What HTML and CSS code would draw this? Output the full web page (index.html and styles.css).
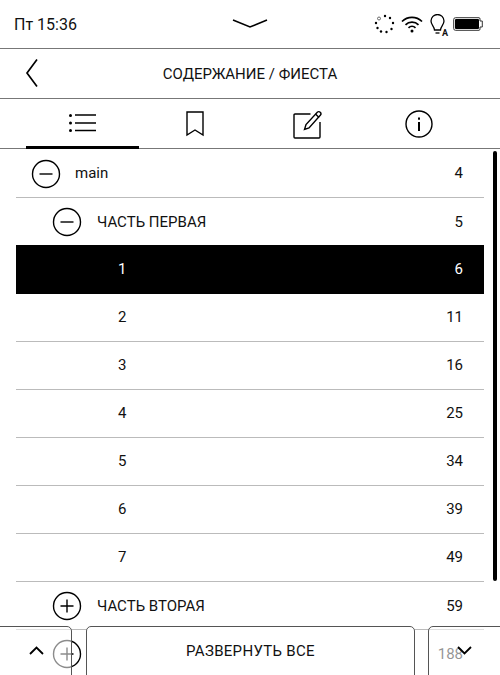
FILE: index.html
```html
<!DOCTYPE html>
<html lang="ru">
<head>
<meta charset="utf-8">
<title>Содержание</title>
<link rel="stylesheet" href="styles.css">
</head>
<body>
<div class="screen">
  <header class="status">
    <span class="clock">Пт 15:36</span>
    <svg class="handle" width="36" height="12" viewBox="0 0 36 12"><path d="M1 2 L18 9 L35 2" fill="none" stroke="#000" stroke-width="1.6"/></svg>
    <div class="status-icons">
      <svg width="22" height="22" viewBox="0 0 22 22" fill="#000">
        <circle cx="5" cy="5.500" r="1.500" fill="none" stroke="#333" stroke-width=".7"/>
        <circle cx="11" cy="3" r="1.200"/><circle cx="16" cy="5" r="1.200"/><circle cx="19" cy="10" r="1.200"/><circle cx="17.500" cy="16" r="1.200"/><circle cx="12.500" cy="19" r="1.200"/><circle cx="7" cy="18.500" r="1.200"/><circle cx="3.500" cy="15" r="1.200"/><circle cx="2" cy="10" r="1.200"/>
      </svg>
      <svg width="22" height="18" viewBox="0 0 22 18" fill="none" stroke="#000" stroke-width="1.700">
        <path d="M1 6.500 C6.500 1 15.500 1 21 6.500"/><path d="M4.500 9.800 C8 6.300 14 6.300 17.500 9.800"/><path d="M7.500 12.800 C9.500 11 12.500 11 14.500 12.800"/>
        <circle cx="11" cy="16" r="1.500" fill="#000" stroke="none"/>
      </svg>
      <span class="bulb">
        <svg width="18" height="23" viewBox="0 0 18 23" fill="none" stroke="#000" stroke-width="1.300"><path d="M4.500 16 C4.500 12.500 1 11 1 7 A6.500 6.500 0 0 1 14 7 C14 11 10.500 12.500 10.500 16 Z"/><path d="M5.500 19 H9.500"/></svg>
        <span class="bulb-a">A</span>
      </span>
      <svg width="30" height="14" viewBox="0 0 30 14"><path d="M2.500 .7 H26 Q27 .7 27 2 V4 H29.300 V10 H27 V12 Q27 13.300 26 13.300 H2.500 Q.7 13.300 .7 11.500 V2.500 Q.7 .7 2.500 .7 Z" fill="none" stroke="#333" stroke-width="1"/><rect x="2" y="2" width="24" height="10" rx="1" fill="#000"/></svg>
    </div>
  </header>

  <div class="titlebar">
    <svg class="back" width="14" height="30" viewBox="0 0 14 30"><path d="M12 1.500 L2 15 L12 28.500" fill="none" stroke="#000" stroke-width="1.700"/></svg>
    <h1 class="title">СОДЕРЖАНИЕ / ФИЕСТА</h1>
  </div>

  <nav class="tabs">
    <div class="tab tab-active">
      <svg width="27" height="20" viewBox="0 0 27 20" fill="#000"><circle cx="1.500" cy="2.500" r="1.500"/><circle cx="1.500" cy="10" r="1.500"/><circle cx="1.500" cy="17.500" r="1.500"/><path d="M6 2 H27 M6 10 H27 M6 17.500 H27" stroke="#000" stroke-width="1.300"/></svg>
    </div>
    <div class="tab tab-book">
      <svg width="18" height="26" viewBox="0 0 18 26"><path d="M1 1 H17 V24 L9 19 L1 24 Z" fill="none" stroke="#000" stroke-width="1.400"/></svg>
    </div>
    <div class="tab">
      <svg width="29" height="29" viewBox="0 0 29 29" fill="none" stroke="#000" stroke-width="1.400"><path d="M17.500 4 H2 Q1 4 1 5 V27 Q1 28 2 28 H26 Q27 28 27 27 V12"/><path d="M11.500 19.500 L13 14.500 L24.500 2 Q26 1 27.500 2.500 Q28.500 4 27.500 5 L16 18 Z"/><path d="M22.500 4 L26 7.500"/></svg>
    </div>
    <div class="tab">
      <svg width="28" height="28" viewBox="0 0 28 28"><circle cx="14" cy="14" r="13" fill="none" stroke="#000" stroke-width="1.400"/><rect x="13" y="12" width="2" height="9" fill="#000"/><rect x="13" y="7.500" width="2" height="2.200" fill="#000"/></svg>
    </div>
  </nav>

  <main class="toc">
    <div class="row">
      <svg class="toggle" width="30" height="30" viewBox="0 0 30 30"><circle cx="15" cy="15" r="13.500" fill="none" stroke="#000" stroke-width="1.400"/><path d="M8.500 15 H21.500" stroke="#000" stroke-width="1.400"/></svg>
      <span class="label">main</span><span class="page">4</span>
    </div>
    <div class="row row-l2">
      <svg class="toggle" width="30" height="30" viewBox="0 0 30 30"><circle cx="15" cy="15" r="13.500" fill="none" stroke="#000" stroke-width="1.400"/><path d="M8.500 15 H21.500" stroke="#000" stroke-width="1.400"/></svg>
      <span class="label">ЧАСТЬ ПЕРВАЯ</span><span class="page">5</span>
    </div>
    <div class="row row-l3 row-current"><span class="label">1</span><span class="page">6</span></div>
    <div class="row row-l3"><span class="label">2</span><span class="page">11</span></div>
    <div class="row row-l3"><span class="label">3</span><span class="page">16</span></div>
    <div class="row row-l3"><span class="label">4</span><span class="page">25</span></div>
    <div class="row row-l3"><span class="label">5</span><span class="page">34</span></div>
    <div class="row row-l3"><span class="label">6</span><span class="page">39</span></div>
    <div class="row row-l3"><span class="label">7</span><span class="page">49</span></div>
    <div class="row row-l2">
      <svg class="toggle" width="30" height="30" viewBox="0 0 30 30"><circle cx="15" cy="15" r="13.500" fill="none" stroke="#000" stroke-width="1.400"/><path d="M8.500 15 H21.500 M15 8.500 V21.500" stroke="#000" stroke-width="1.400"/></svg>
      <span class="label">ЧАСТЬ ВТОРАЯ</span><span class="page">59</span>
    </div>
    <div class="row row-l2">
      <svg class="toggle" width="30" height="30" viewBox="0 0 30 30"><circle cx="15" cy="15" r="13.500" fill="none" stroke="#000" stroke-width="1.400"/><path d="M8.500 15 H21.500 M15 8.500 V21.500" stroke="#000" stroke-width="1.400"/></svg>
      <span class="label"></span><span class="page">188</span>
    </div>
    <div class="scrollbar"></div>
  </main>

  <footer class="footer">
    <button class="fbtn fbtn-left"><svg width="15" height="9" viewBox="0 0 15 9"><path d="M1 8 L7.500 1.500 L14 8" fill="none" stroke="#000" stroke-width="1.800"/></svg></button>
    <button class="fbtn fbtn-mid">РАЗВЕРНУТЬ ВСЕ</button>
    <button class="fbtn fbtn-right"><svg width="15" height="9" viewBox="0 0 15 9"><path d="M1 1 L7.500 7.500 L14 1" fill="none" stroke="#000" stroke-width="1.800"/></svg></button>
  </footer>
</div>
</body>
</html>
```

FILE: styles.css
```css
* { box-sizing: border-box; }
html, body { margin: 0; padding: 0; background: #fff; }
.screen {
  position: relative;
  width: 500px;
  height: 675px;
  overflow: hidden;
  font-family: Roboto, "Liberation Sans", sans-serif;
  color: #111;
  background: #fff;
}
.status {
  position: relative;
  height: 49px;
  border-bottom: 1px solid #777;
  display: flex;
  align-items: center;
  justify-content: space-between;
  padding: 0 17px 0 14px;
}
.clock { font-size: 16px; }
.handle { position: absolute; left: 232px; top: 18px; }
.status-icons { display: flex; align-items: center; gap: 5px; }
.bulb { position: relative; width: 18px; height: 23px; display: block; margin: 3px 0 0 2px; }
.bulb svg { display: block; }
.bulb-a { position: absolute; right: 0; bottom: -1px; font-size: 9px; font-weight: 700; line-height: 10px; }
.titlebar {
  position: relative;
  height: 50px;
  border-bottom: 1px solid #777;
  display: flex;
  align-items: center;
  justify-content: center;
}
.back { position: absolute; left: 25px; top: 9px; }
.title { margin: 0; font-size: 15px; font-weight: 400; }
.tabs {
  height: 50px;
  border-bottom: 1px solid #777;
  display: grid;
  grid-template-columns: 113px 112px 112px 112px;
  padding: 0 0 0 26px;
}
.tab { display: flex; align-items: center; justify-content: center; }
.tab-active { border-bottom: 3px solid #000; height: 50px; padding-top: 1px; }
.toc { position: relative; height: 526px; padding-top: 1px; }
.row {
  height: 48px;
  margin: 0 16px;
  border-bottom: 1px solid #bbb;
  display: flex;
  align-items: center;
  font-size: 15px;
  padding-right: 21px;
}
.toggle { flex: none; margin-left: 15px; margin-right: 14px; }
.row-l2 .toggle { margin-left: 36px; margin-right: 15px; }
.row-l3 .label { margin-left: 102px; }
.label { flex: 1; margin-bottom: 2px; }
.page { margin-bottom: 2px; }
.row-l2 .label, .row-l2 .page { margin-bottom: 0; }
.row-current .label, .row-current .page { margin-bottom: 0; }
.row-current { background: #000; color: #fff; border-bottom-color: #000; height: 49px; margin-top: -1px; }
.row-l2:nth-child(2) { border-bottom: 0; }
.scrollbar {
  position: absolute;
  left: 493px;
  top: 2px;
  width: 4px;
  height: 430px;
  background: #000;
  border-radius: 2px;
}
.footer { position: absolute; left: 0; right: 0; top: 626px; height: 49px; }
.fbtn {
  position: absolute;
  top: 0;
  height: 60px;
  font: 15px Roboto, "Liberation Sans", sans-serif;
  letter-spacing: .3px;
  color: #111;
  background: rgba(255, 255, 255, .55);
  border: 1px solid #555;
  border-radius: 5px 5px 0 0;
  padding: 0 0 11px;
  display: flex;
  align-items: center;
  justify-content: center;
}
.fbtn-left { left: -6px; width: 78px; justify-content: flex-start; padding-left: 34px; }
.fbtn-mid { left: 86px; width: 329px; background: #fff; }
.fbtn-right { left: 428px; width: 80px; justify-content: flex-start; padding-left: 28px; }
```
